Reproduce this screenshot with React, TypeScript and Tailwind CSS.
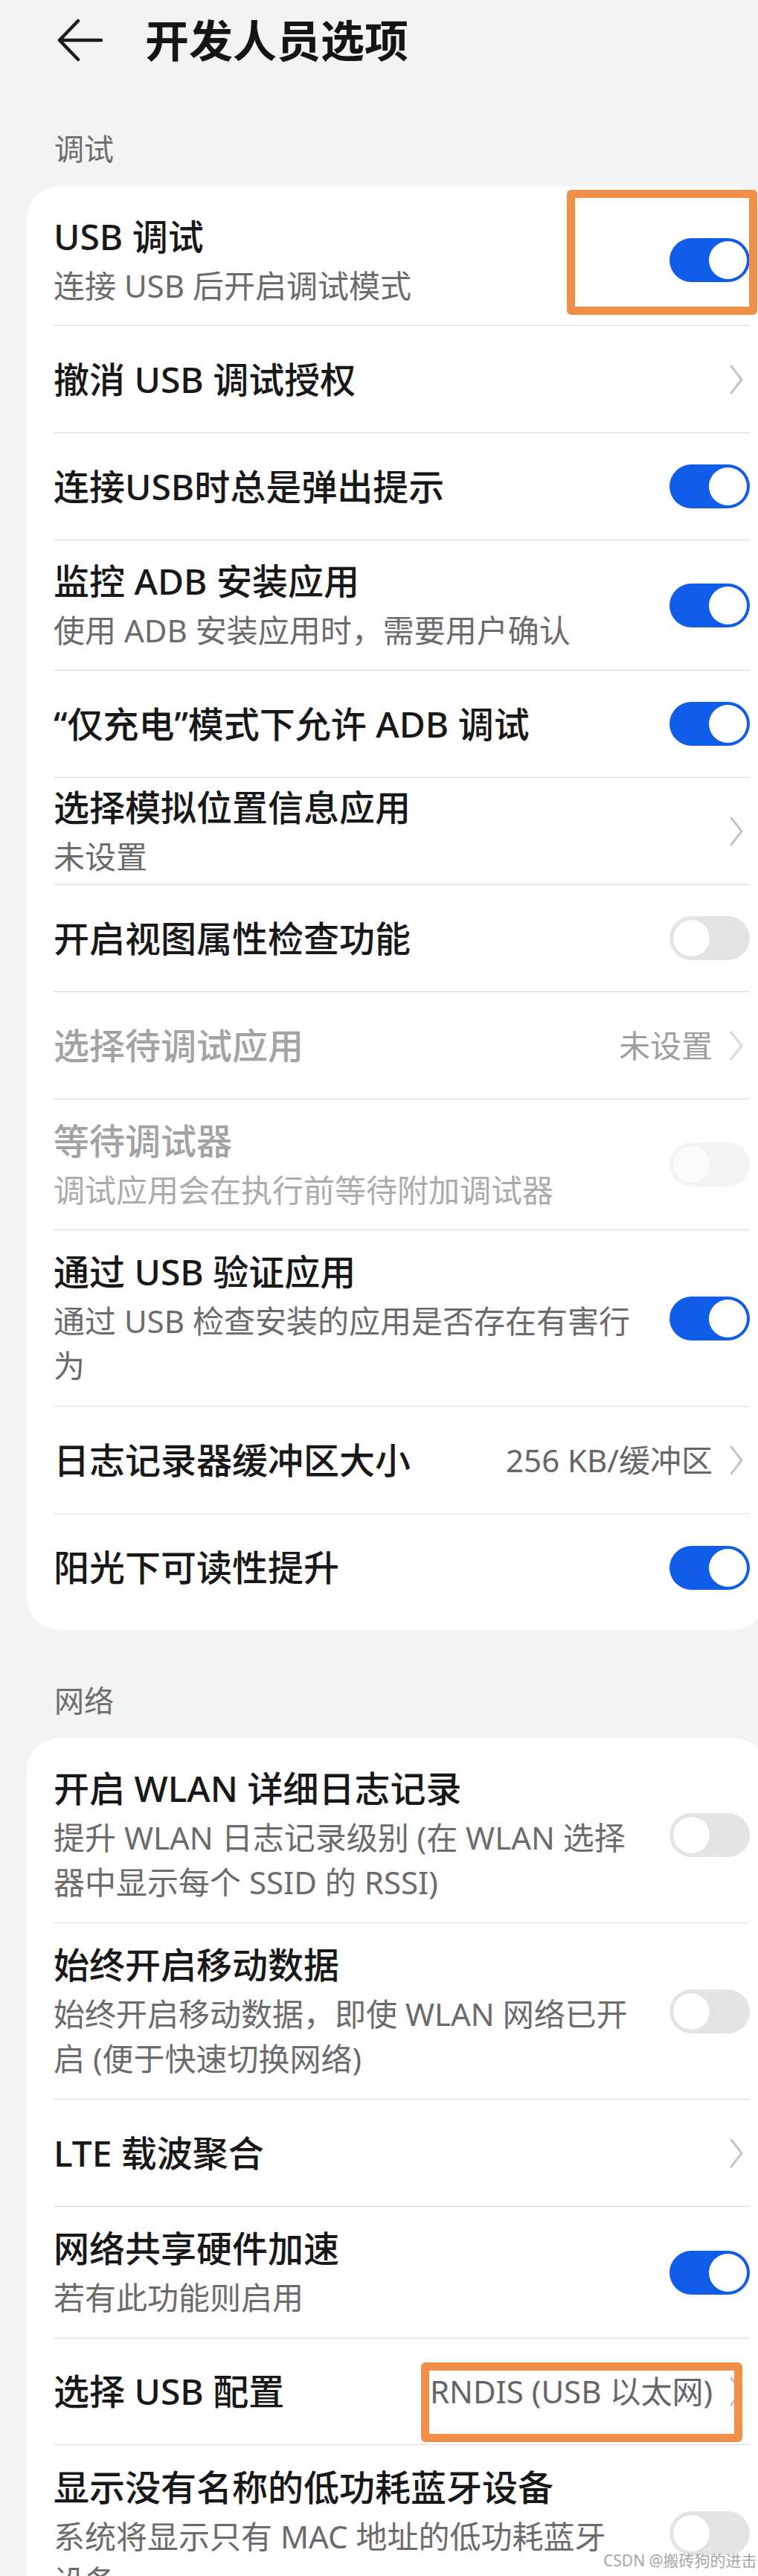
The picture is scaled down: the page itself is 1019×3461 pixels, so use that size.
type RightKind = 'on' | 'off' | 'chev'

interface Row {
  title: string
  sub?: string[]
  value?: string
  h: string
  right: RightKind
  disabled?: boolean
  last?: boolean
}

const DEBUG_ROWS: Row[] = [
  { title: 'USB 调试', sub: ['连接 USB 后开启调试模式'], h: 'h-[176px]', right: 'on' },
  { title: '撤消 USB 调试授权', h: 'h-[144px]', right: 'chev' },
  { title: '连接USB时总是弹出提示', h: 'h-[144px]', right: 'on' },
  { title: '监控 ADB 安装应用', sub: ['使用 ADB 安装应用时，需要用户确认'], h: 'h-[175px]', right: 'on' },
  { title: '“仅充电”模式下允许 ADB 调试', h: 'h-[144px]', right: 'on' },
  { title: '选择模拟位置信息应用', sub: ['未设置'], h: 'h-[144px]', right: 'chev' },
  { title: '开启视图属性检查功能', h: 'h-[144px]', right: 'off' },
  { title: '选择待调试应用', value: '未设置', h: 'h-[144px]', right: 'chev', disabled: true },
  { title: '等待调试器', sub: ['调试应用会在执行前等待附加调试器'], h: 'h-[176px]', right: 'off', disabled: true },
  {
    title: '通过 USB 验证应用',
    sub: ['通过 USB 检查安装的应用是否存在有害行', '为'],
    h: 'h-[237px]',
    right: 'on',
  },
  { title: '日志记录器缓冲区大小', value: '256 KB/缓冲区', h: 'h-[144px]', right: 'chev' },
  { title: '阳光下可读性提升', h: 'h-[144px]', right: 'on', last: true },
]

const NETWORK_ROWS: Row[] = [
  {
    title: '开启 WLAN 详细日志记录',
    sub: ['提升 WLAN 日志记录级别 (在 WLAN 选择', '器中显示每个 SSID 的 RSSI)'],
    h: 'h-[237px]',
    right: 'off',
  },
  {
    title: '始终开启移动数据',
    sub: ['始终开启移动数据，即使 WLAN 网络已开', '启 (便于快速切换网络)'],
    h: 'h-[237px]',
    right: 'off',
  },
  { title: 'LTE 载波聚合', h: 'h-[144px]', right: 'chev' },
  { title: '网络共享硬件加速', sub: ['若有此功能则启用'], h: 'h-[177px]', right: 'on' },
  { title: '选择 USB 配置', value: 'RNDIS (USB 以太网)', h: 'h-[143px]', right: 'chev' },
  {
    title: '显示没有名称的低功耗蓝牙设备',
    sub: ['系统将显示只有 MAC 地址的低功耗蓝牙', '设备'],
    h: 'h-[237px]',
    right: 'off',
    last: true,
  },
]

function BackArrow() {
  return (
    <svg width="62" height="58" viewBox="0 0 62 58" fill="none" className="shrink-0">
      <path
        d="M28 3 L3 29 L28 55 M3 29 H59"
        stroke="#1c1c1c"
        strokeWidth="4.5"
        strokeLinecap="round"
        strokeLinejoin="round"
      />
    </svg>
  )
}

function Chevron({ faded }: { faded?: boolean }) {
  return (
    <svg width="20" height="40" viewBox="0 0 20 40" fill="none" className="shrink-0">
      <path
        d="M3 2 L17 20 L3 38"
        stroke={faded ? '#dadada' : '#c4c4c4'}
        strokeWidth="3"
        strokeLinecap="round"
        strokeLinejoin="round"
      />
    </svg>
  )
}

function Toggle({ on, disabled }: { on: boolean; disabled?: boolean }) {
  if (on) {
    return (
      <div className="w-[108px] h-[59px] shrink-0 rounded-full bg-[#0f5de9] p-[4px] flex justify-end">
        <div className="w-[51px] h-[51px] rounded-full bg-white" />
      </div>
    )
  }
  return (
    <div
      className={
        disabled
          ? 'w-[108px] h-[59px] shrink-0 rounded-full bg-[#f3f3f3] p-[4px] flex justify-start'
          : 'w-[108px] h-[59px] shrink-0 rounded-full bg-[#e4e4e4] p-[4px] flex justify-start'
      }
    >
      <div
        className={
          disabled
            ? 'w-[51px] h-[51px] rounded-full bg-[#fbfbfb] border border-[#f0f0f0]'
            : 'w-[51px] h-[51px] rounded-full bg-white border border-[#dddddd]'
        }
      />
    </div>
  )
}

function SettingRow({ row }: { row: Row }) {
  const titleColor = row.disabled ? 'text-[#a3a3a3]' : 'text-[#181818]'
  const subColor = row.disabled ? 'text-[#ababab]' : 'text-[#6b6b6b]'
  return (
    <div
      className={`${row.h} flex items-center justify-between ${row.last ? '' : 'border-b border-[#dcdcdc]'}`}
    >
      <div className="flex flex-col">
        <div className={`text-[48px] leading-[64px] font-medium whitespace-nowrap ${titleColor}`}>{row.title}</div>
        {row.sub && (
          <div className="mt-[4px] flex flex-col">
            {row.sub.map((line) => (
              <div key={line} className={`text-[42px] leading-[60px] whitespace-nowrap ${subColor}`}>
                {line}
              </div>
            ))}
          </div>
        )}
      </div>
      {row.right === 'chev' ? (
        <div className="flex items-center gap-[22px] mr-[8px]">
          {row.value && (
            <span
              className={`text-[42px] leading-[56px] whitespace-nowrap ${row.disabled ? 'text-[#9e9e9e]' : 'text-[#666666]'}`}
            >
              {row.value}
            </span>
          )}
          <Chevron faded={row.disabled} />
        </div>
      ) : (
        <Toggle on={row.right === 'on'} disabled={row.disabled} />
      )}
    </div>
  )
}

function SectionLabel({ text, top }: { text: string; top: string }) {
  return (
    <div className={`${top} pl-[73px] h-[56px] mb-[22px] text-[40px] leading-[56px] text-[#6e6e6e]`}>{text}</div>
  )
}

function Card({ rows }: { rows: Row[] }) {
  return (
    <div className="ml-[36px] w-[994px] bg-white rounded-[44px] pl-[36px] pr-[22px] pt-[12px] pb-[12px]">
      {rows.map((row) => (
        <SettingRow key={row.title} row={row} />
      ))}
    </div>
  )
}

export default function App() {
  return (
    <div className="relative w-[1019px] h-[3461px] overflow-hidden bg-[#f1f3f5] font-['Noto_Sans','Noto_Sans_CJK_SC',sans-serif]">
      <div className="h-[108px] flex items-center pl-[77px] gap-[56px]">
        <BackArrow />
        <h1 className="text-[59px] leading-[72px] font-bold text-[#151515]">开发人员选项</h1>
      </div>

      <SectionLabel text="调试" top="mt-[64px]" />
      <Card rows={DEBUG_ROWS} />

      <SectionLabel text="网络" top="mt-[67px]" />
      <Card rows={NETWORK_ROWS} />

      {/* annotation boxes drawn over the screenshot */}
      <div className="absolute left-[762px] top-[255px] w-[256px] h-[168px] border-[11px] border-[#ef8f48] rounded-[6px]" />
      <div className="absolute left-[566px] top-[3174px] w-[432px] h-[107px] border-[11px] border-[#ef8f48] rounded-[6px]" />

      <div className="absolute left-[811px] top-[3426px] text-[21px] leading-[28px] text-[#a6a6a6] whitespace-nowrap">
        CSDN @搬砖狗的进击
      </div>
    </div>
  )
}
